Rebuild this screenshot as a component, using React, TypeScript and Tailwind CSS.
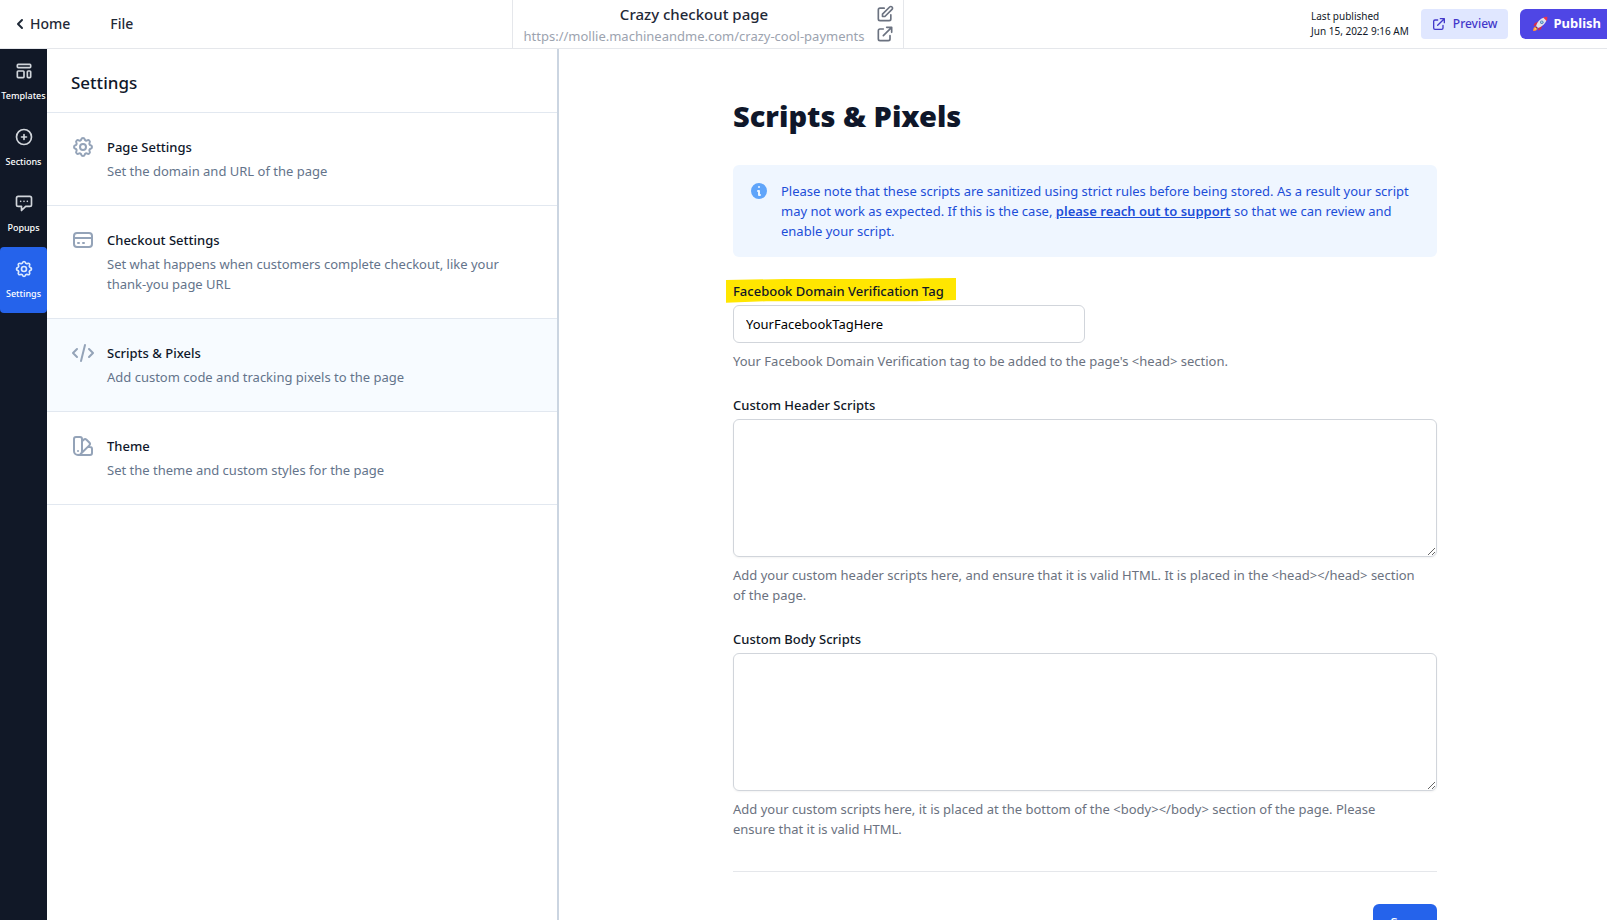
import React, { useState } from "react";
import {
  HiChevronLeft,
  HiInformationCircle,
  HiOutlineChatAlt,
  HiOutlineCode,
  HiOutlineCog,
  HiOutlineColorSwatch,
  HiOutlineCreditCard,
  HiOutlineExternalLink,
  HiOutlinePencilAlt,
  HiOutlinePlusCircle,
  HiOutlineTemplate,
} from "react-icons/hi";

const sideItems = [
  { label: "Templates", icon: HiOutlineTemplate },
  { label: "Sections", icon: HiOutlinePlusCircle },
  { label: "Popups", icon: HiOutlineChatAlt },
  { label: "Settings", icon: HiOutlineCog },
];

const settingsItems = [
  {
    title: "Page Settings",
    description: "Set the domain and URL of the page",
    icon: HiOutlineCog,
  },
  {
    title: "Checkout Settings",
    description:
      "Set what happens when customers complete checkout, like your thank-you page URL",
    icon: HiOutlineCreditCard,
  },
  {
    title: "Scripts & Pixels",
    description: "Add custom code and tracking pixels to the page",
    icon: HiOutlineCode,
  },
  {
    title: "Theme",
    description: "Set the theme and custom styles for the page",
    icon: HiOutlineColorSwatch,
  },
];

const RocketIcon = () => (
  <svg viewBox="0 0 16 16" className="h-4 w-4" aria-hidden="true">
    <path d="M1 15c0-2.400.8-4.300 2.600-4.600l2 2C5.300 14.200 3.400 15 1 15z" fill="#ff8a3c" />
    <path d="M2.200 13.800c.1-1.300.7-2.200 1.700-2.400l.8.800c-.3 1-1.200 1.500-2.500 1.600z" fill="#ffd35c" />
    <path d="M6.300 5.600 2.600 7.200 1.500 10l3-.6zM10.400 9.700l-1.600 3.700L6 14.500l.6-3z" fill="#d92b4b" />
    <path d="M4 10.200C5 6 8.600 2 12.400 1.400l2.200 2.200C14 7.400 10 11 5.800 12z" fill="#dfe3ee" />
    <path d="M15.300.7c.2 1.400 0 2.900-.7 4.200L11.100 1.400c1.300-.7 2.800-.9 4.200-.7z" fill="#e8344f" />
    <path d="M4 10.200 5.800 12l-1.200.5-1.100-1.100z" fill="#a3243b" />
    <circle cx="9.800" cy="6.200" r="1.700" fill="#4a7bb5" />
    <circle cx="9.800" cy="6.200" r=".9" fill="#9cd3f5" />
  </svg>
);

const Header = () => (
  <header className="flex h-[49px] shrink-0 overflow-hidden border-b border-[#e5e7eb]">
    <nav className="flex w-[512px] shrink-0 items-center gap-10 pl-2.5 text-sm font-medium text-[#1f2937]">
      <a href="#" className="flex items-center">
        <HiChevronLeft className="h-5 w-5" />
        Home
      </a>
      <button type="button">File</button>
    </nav>
    <div className="flex items-center gap-2 border-x border-[#e5e7eb] px-2">
      <div className="min-w-[346px] text-center">
        <p className="text-[15px] leading-6 font-medium text-[#1f2937]">
          Crazy checkout page
        </p>
        <p className="text-[13px] leading-5 text-[#9ca3af]">
          https://mollie.machineandme.com/crazy-cool-payments
        </p>
      </div>
      <div className="flex flex-col text-[#6b7280]">
        <button type="button" aria-label="Edit page name">
          <HiOutlinePencilAlt className="h-5 w-5" />
        </button>
        <a href="#" aria-label="Open page">
          <HiOutlineExternalLink className="h-5 w-5" />
        </a>
      </div>
    </div>
    <div className="-mr-2 ml-auto flex items-center gap-3">
      <p className="text-[10px] leading-[15px] text-[#111827]">
        Last published
        <br />
        Jun 15, 2022 9:16 AM
      </p>
      <button
        type="button"
        className="flex h-[30px] items-center gap-1.5 rounded bg-[#e0e7ff] px-2.5 text-xs font-medium text-[#4338ca]"
      >
        <HiOutlineExternalLink className="h-4 w-4" />
        Preview
      </button>
      <button
        type="button"
        className="flex h-[30px] items-center gap-1.5 rounded-md bg-[#4f46e5] pr-3.5 pl-3 text-[13px] font-bold text-white"
      >
        <RocketIcon />
        Publish
      </button>
    </div>
  </header>
);

const Sidebar = () => (
  <nav className="w-[47px] shrink-0 bg-[#111827]">
    {sideItems.map(({ label, icon: Icon }) => (
      <button
        key={label}
        type="button"
        className={`flex w-full flex-col items-center gap-2 py-3 ${
          label === "Settings"
            ? "rounded-sm bg-[#2563eb] text-[#dbeafe]"
            : "text-[#d1d5db]"
        }`}
      >
        <Icon className="h-5 w-5" />
        <span className="text-[9px] leading-[14px] font-medium text-white">
          {label}
        </span>
      </button>
    ))}
  </nav>
);

const SettingsPanel = ({
  active,
  onSelect,
}: {
  active: string;
  onSelect: (title: string) => void;
}) => (
  <aside className="w-[512px] shrink-0 border-r-2 border-[#cbd5e1]">
    <h2 className="border-b border-[#e2e8f0] px-6 pt-5 pb-4 text-[17px] leading-[27px] font-medium text-[#0f172a]">
      Settings
    </h2>
    {settingsItems.map(({ title, description, icon: Icon }) => (
      <button
        key={title}
        type="button"
        onClick={() => onSelect(title)}
        className={`flex w-full items-start gap-3 border-b border-[#e2e8f0] p-6 text-left text-[13px] leading-5 ${
          active === title ? "bg-[#f7fbff]" : "bg-white"
        }`}
      >
        <Icon className="-mt-0.5 h-6 w-6 shrink-0 text-[#94a3b8]" />
        <span className="flex flex-col gap-1">
          <span className="font-medium text-[#0f172a]">{title}</span>
          <span className="text-[#64748b]">{description}</span>
        </span>
      </button>
    ))}
  </aside>
);

const Field = ({
  id,
  label,
  help,
  highlight,
  children,
}: {
  id: string;
  label: string;
  help: string;
  highlight?: boolean;
  children: React.ReactNode;
}) => (
  <div className="mt-6 flex flex-col items-start">
    <label
      htmlFor={id}
      className="relative isolate mb-1 font-medium text-[#111827]"
    >
      {highlight && (
        <svg
          viewBox="0 0 230 25"
          className="absolute -top-[3px] -left-[7px] -z-10 h-[25px] w-[230px]"
          aria-hidden="true"
        >
          <path d="M0 2 60 1h110L205 .3 230 0v22l-40 1.300H40L0 24.700z" fill="#ffe600" />
        </svg>
      )}
      {label}
    </label>
    {children}
    <p className="mt-2 pr-[18px] text-[#6b7280]">{help}</p>
  </div>
);

const ScriptsForm = () => (
  <form className="mx-auto max-w-3xl px-8 py-12 text-[13px] leading-5">
    <h1 className="mb-[30px] text-[29px] leading-[38px] font-black text-[#0f172a]">
      Scripts &amp; Pixels
    </h1>
    <div className="flex items-start gap-3 rounded-md bg-[#eff6ff] p-4 text-[#1d4ed8]">
      <HiInformationCircle className="h-5 w-5 shrink-0 text-[#60a5fa]" />
      <p>
        Please note that these scripts are sanitized using strict rules before
        being stored. As a result your script may not work as expected. If this
        is the case,{" "}
        <a href="#" className="font-semibold underline">
          please reach out to support
        </a>{" "}
        so that we can review and enable your script.
      </p>
    </div>

    <Field
      id="facebook-tag"
      label="Facebook Domain Verification Tag"
      help="Your Facebook Domain Verification tag to be added to the page's <head> section."
      highlight
    >
      <input
        id="facebook-tag"
        type="text"
        defaultValue="YourFacebookTagHere"
        className="h-[38px] w-1/2 rounded-md border border-[#d1d5db] px-3 text-black"
      />
    </Field>
    <Field
      id="header-scripts"
      label="Custom Header Scripts"
      help="Add your custom header scripts here, and ensure that it is valid HTML. It is placed in the <head></head> section of the page."
    >
      <textarea
        id="header-scripts"
        className="h-[138px] w-full rounded-md border border-[#d1d5db] px-3 py-2 shadow-xs"
      />
    </Field>
    <Field
      id="body-scripts"
      label="Custom Body Scripts"
      help="Add your custom scripts here, it is placed at the bottom of the <body></body> section of the page. Please ensure that it is valid HTML."
    >
      <textarea
        id="body-scripts"
        className="h-[138px] w-full rounded-md border border-[#d1d5db] px-3 py-2 shadow-xs"
      />
    </Field>

    <div className="mt-8 flex justify-end border-t border-[#e5e7eb] pt-8">
      <button
        type="button"
        className="w-16 rounded-md bg-[#2563eb] py-2 font-medium text-white"
      >
        Save
      </button>
    </div>
  </form>
);

export default function App() {
  const [active, setActive] = useState("Scripts & Pixels");

  return (
    <div className="flex h-screen flex-col overflow-hidden bg-white font-['Noto_Sans',sans-serif]">
      <Header />
      <div className="flex min-h-0 flex-1">
        <Sidebar />
        <SettingsPanel active={active} onSelect={setActive} />
        <main className="min-w-0 flex-1 overflow-y-auto pl-1 [scrollbar-width:none]">
          <ScriptsForm />
        </main>
      </div>
    </div>
  );
}
